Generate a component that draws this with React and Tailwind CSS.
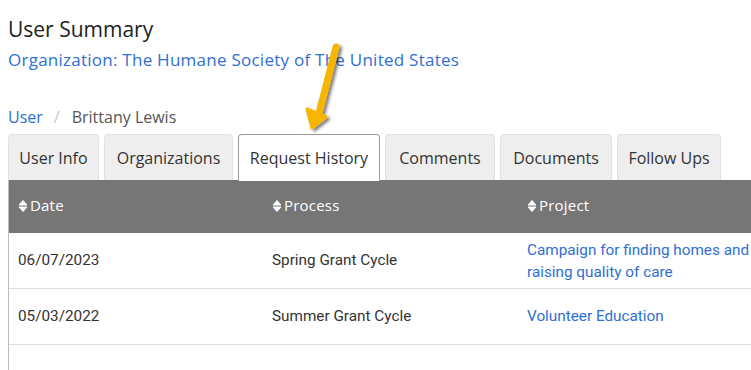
import React from "react";

const SortIcon = () => (
  <svg width="10" height="14" viewBox="0 0 10 14" className="mr-[2px]">
    <path d="M1 6 L5 1.5 L9 6 Z" fill="white" stroke="white" strokeWidth="1" strokeLinejoin="round" />
    <path d="M1 8 L5 12.5 L9 8 Z" fill="white" stroke="white" strokeWidth="1" strokeLinejoin="round" />
  </svg>
);

const tabs = [
  { t: "User Info", w: "w-[91px]" },
  { t: "Organizations", w: "w-[129px]" },
  { t: "Request History", w: "w-[142px]" },
  { t: "Comments", w: "w-[110px]" },
  { t: "Documents", w: "w-[112px]" },
  { t: "Follow Ups", w: "w-[104px]" },
];

export default function App() {
  const poppins = { fontFamily: '"Open Sans", "Noto Sans", sans-serif' };
  return (
    <div className="relative w-[751px] h-[370px] overflow-hidden bg-white" style={poppins}>
      <div className="pl-[8px]">
        <h1 className="pt-[15px] text-[21px] leading-[28px] text-[#222]">User Summary</h1>
        <div className="mt-[5px] text-[17px] leading-[24px] tracking-[0.25px] text-[#2f6fd2]">
          Organization: The Humane Society of The United States
        </div>
        <div className="mt-[34px] flex items-center text-[16px] leading-[22px]">
          <span className="text-[#2f6fd2]">User</span>
          <span className="ml-[11px] mr-[12px] text-[#c8c8c8]">/</span>
          <span className="text-[#555]">Brittany Lewis</span>
        </div>
        <div className="mt-[6px] flex items-end gap-[5px] h-[46px]">
          {tabs.map(({ t, w }) => {
            const active = t === "Request History";
            return (
              <div
                key={t}
                className={
                  (active
                    ? "h-[47px] -mb-[1px] flex items-center justify-center rounded-t-[4px] border border-[#9a9a9a] border-b-0 bg-white text-[16px] text-[#333] z-10 "
                    : "h-[46px] flex items-center justify-center rounded-t-[4px] border border-[#e2e2e2] border-b-0 bg-[#eeeeee] text-[16px] text-[#333] ") + w
                }
              >
                {t}
              </div>
            );
          })}
        </div>
        <div className="w-[1020px] border-l border-[#bdbdbd]">
          <div className="h-[53px] pb-[2px] bg-[#767676] grid grid-cols-[254px_255px_511px] items-center text-white text-[15px] tracking-[0.2px]">
            <div className="flex items-center pl-[9px]"><SortIcon />Date</div>
            <div className="flex items-center pl-[9px]"><SortIcon />Process</div>
            <div className="flex items-center pl-[9px]"><SortIcon />Project</div>
          </div>
          <div style={{ fontFamily: "Roboto, sans-serif" }} className="text-[15.3px] text-[#333]">
            <div className="h-[56px] grid grid-cols-[254px_255px_511px] items-center border-b border-[#dddddd]">
              <div className="pl-[9px]">06/07/2023</div>
              <div className="pl-[9px]">Spring Grant Cycle</div>
              <div className="pl-[9px] text-[#2f6fd2] leading-[22px] w-[240px]">Campaign for finding homes and raising quality of care</div>
            </div>
            <div className="h-[56px] grid grid-cols-[254px_255px_511px] items-center border-b border-[#dddddd]">
              <div className="pl-[9px]">05/03/2022</div>
              <div className="pl-[9px]">Summer Grant Cycle</div>
              <div className="pl-[9px] text-[#2f6fd2]">Volunteer Education</div>
            </div>
            <div className="h-[40px]"></div>
          </div>
        </div>
      </div>
      <svg className="absolute left-0 top-0 pointer-events-none" width="751" height="370">
        <defs>
          <filter id="sh" x="-50%" y="-50%" width="200%" height="200%">
            <feDropShadow dx="2.5" dy="2" stdDeviation="1.5" floodColor="#000" floodOpacity="0.5" />
          </filter>
        </defs>
        <g filter="url(#sh)">
          <line x1="336" y1="47" x2="319" y2="113" stroke="#f6b500" strokeWidth="7" strokeLinecap="round" />
          <path d="M307 109 L312 128 L326 117 Z" fill="#f6b500" stroke="#f6b500" strokeWidth="3" strokeLinejoin="round" />
        </g>
      </svg>
    </div>
  );
}
